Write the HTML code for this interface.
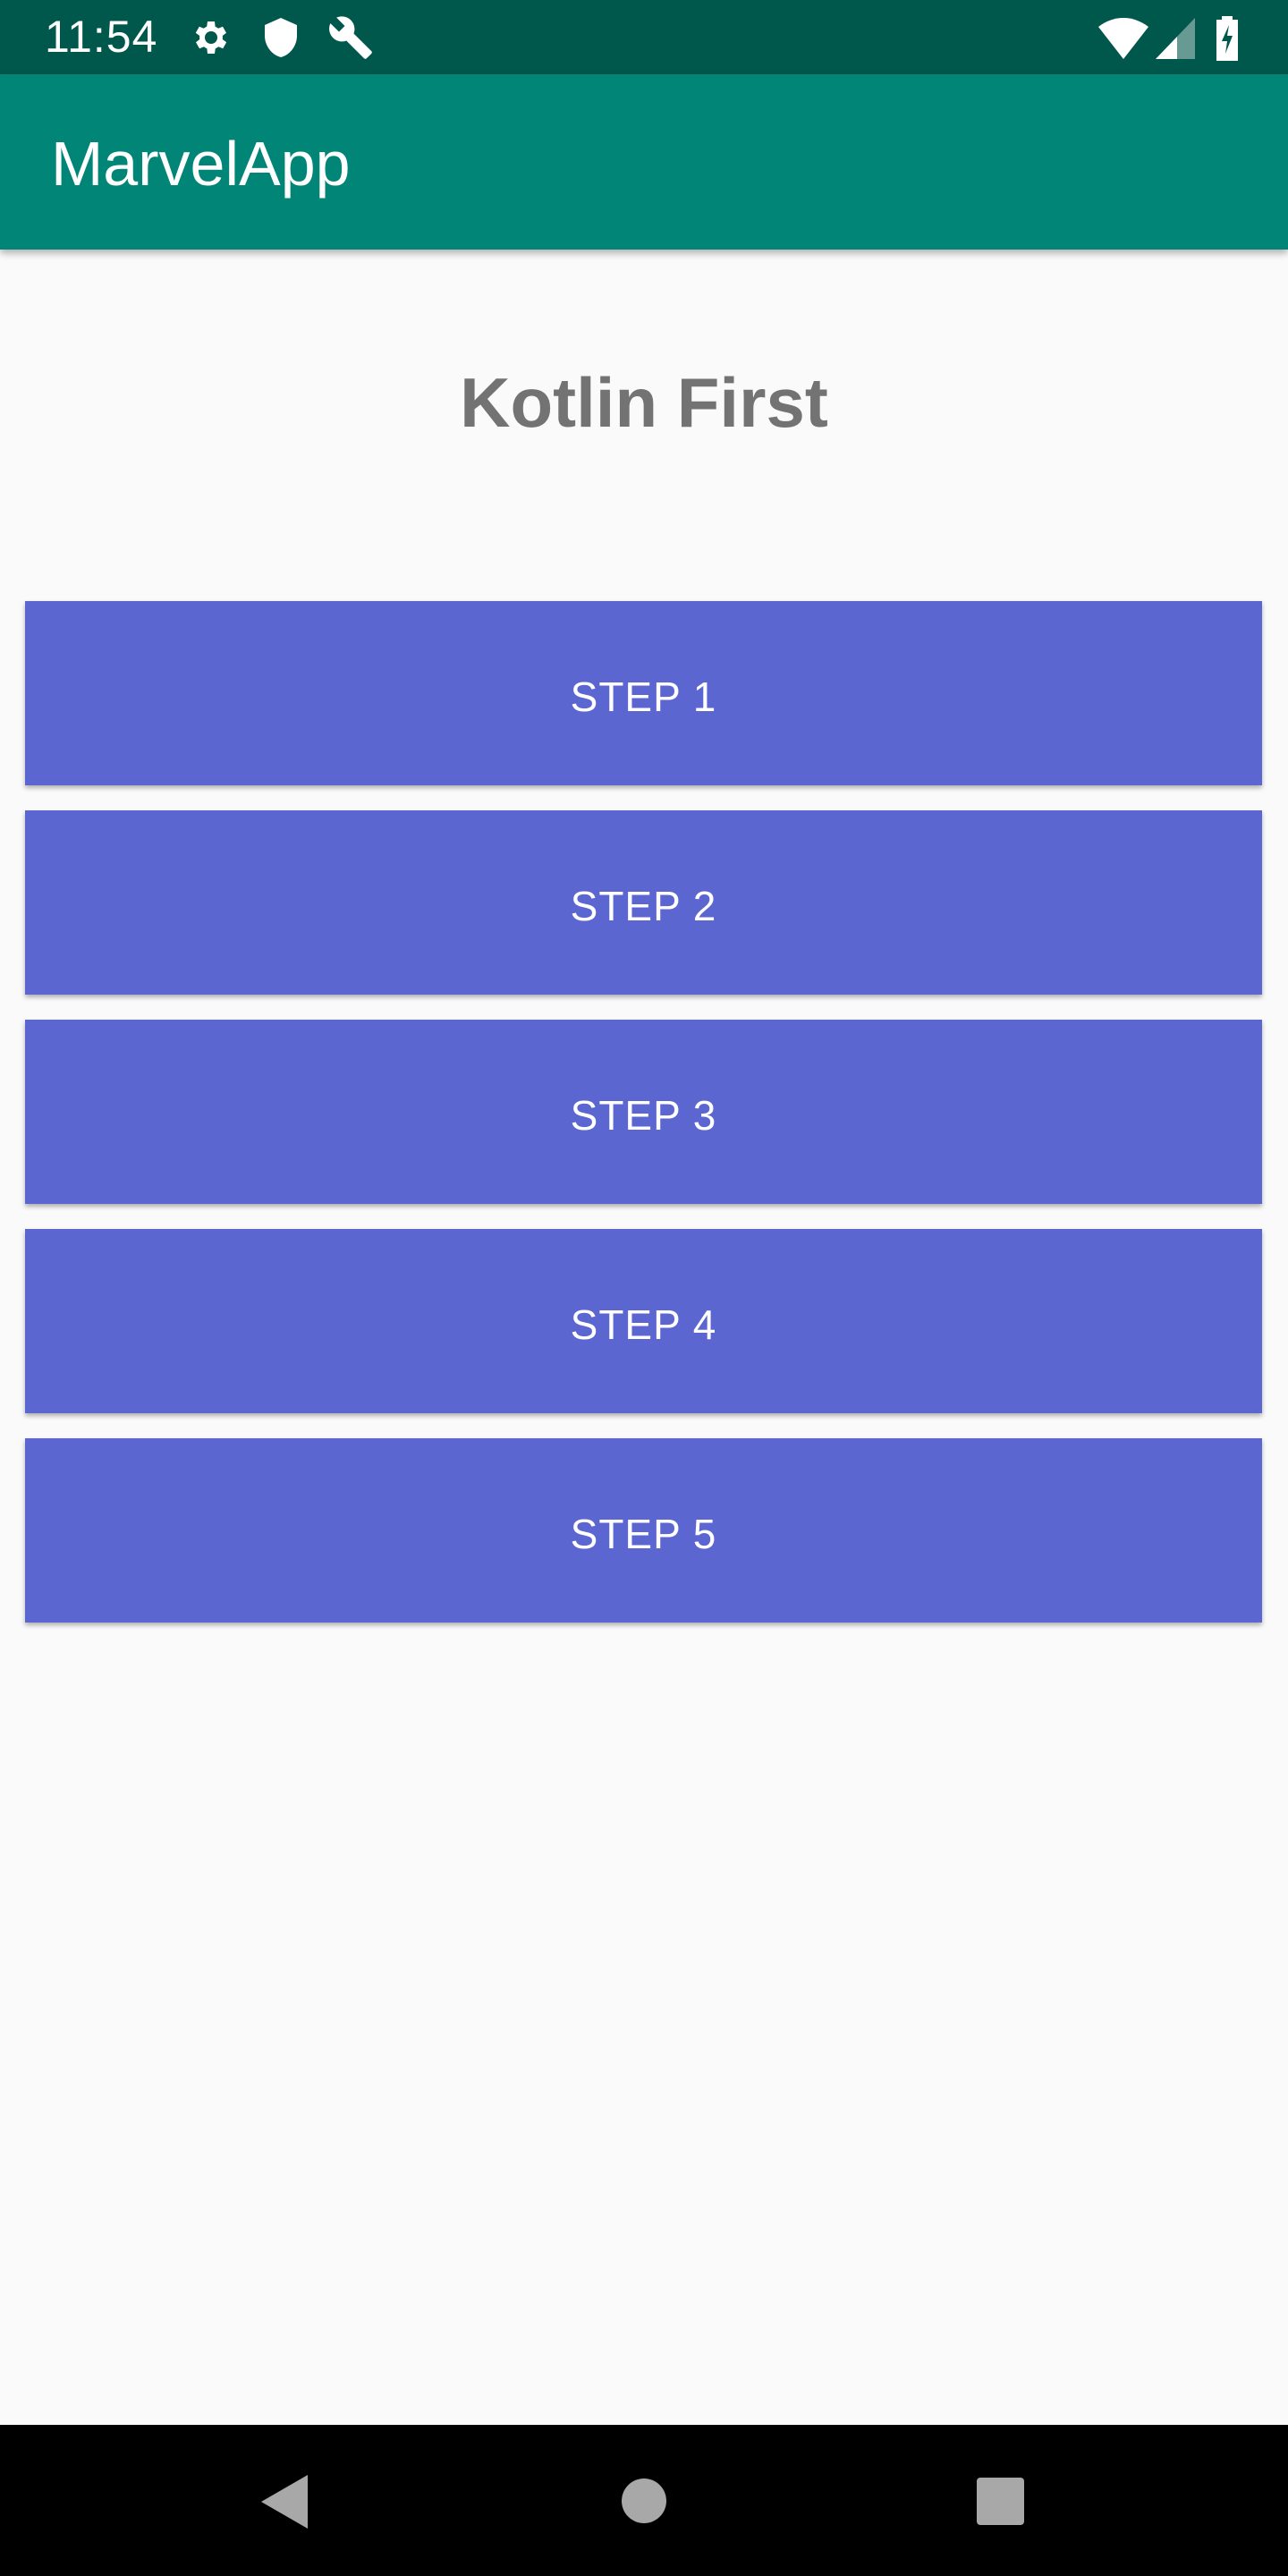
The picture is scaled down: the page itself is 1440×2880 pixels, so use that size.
<!DOCTYPE html>
<html><head><meta charset="utf-8"><style>
html,body{margin:0;padding:0;width:1440px;height:2880px;background:#fafafa;overflow:hidden;font-family:"Liberation Sans",Roboto,sans-serif;position:relative}
.sb{position:absolute;left:0;top:0;width:1440px;height:83px;background:#00574b}
.ab{position:absolute;left:0;top:83px;width:1440px;height:196px;background:#008577;box-shadow:0 4px 8px rgba(0,0,0,.3)}
.time{position:absolute;left:50px;top:13px;color:#fff;font-size:50px;line-height:56px;letter-spacing:1px}
.title{position:absolute;left:57px;top:0;height:196px;line-height:200px;color:#fff;font-size:70px}
.h{position:absolute;left:0;width:1440px;top:405px;text-align:center;font-size:78px;font-weight:bold;color:#737373}
.btn{position:absolute;left:28px;width:1383px;height:206px;background:#5c66d1;color:#fff;font-size:46px;text-align:center;line-height:214px;box-shadow:0 3px 5px rgba(0,0,0,.3);letter-spacing:1px}
.nav{position:absolute;left:0;top:2711px;width:1440px;height:169px;background:#000}
</style></head><body>
<div class="sb">
<div class="time">11:54</div>
<svg style="position:absolute;left:212px;top:18px" width="48" height="48" viewBox="0 0 24 24"><path fill="#fff" d="M19.4 13a7.5 7.5 0 000-2l2.1-1.6-2-3.5-2.5 1a7 7 0 00-1.7-1L15 3h-4l-.4 2.9a7 7 0 00-1.7 1l-2.5-1-2 3.5L6.6 11a7.5 7.5 0 000 2l-2.1 1.6 2 3.5 2.5-1a7 7 0 001.7 1L11 21h4l.4-2.9a7 7 0 001.7-1l2.5 1 2-3.5zM13 15.5a3.5 3.5 0 110-7 3.5 3.5 0 010 7z" transform="translate(-1 0)"/></svg>
<svg style="position:absolute;left:292px;top:18px" width="44" height="48" viewBox="0 0 22 24"><path fill="#fff" d="M11 1L2 5v6c0 5.5 3.8 10.7 9 12 5.2-1.3 9-6.5 9-12V5z"/></svg>
<svg style="position:absolute;left:366px;top:16px" width="52" height="52" viewBox="0 0 24 24"><path fill="#fff" d="M22.7 19l-9.1-9.1c.9-2.3.4-5-1.5-6.9-2-2-5-2.4-7.4-1.3L9 6 6 9 1.6 4.7C.4 7.1.9 10.1 2.9 12.1c1.900 1.9 4.6 2.4 6.9 1.5l9.1 9.1c.4.4 1 .4 1.4 0l2.3-2.3c.5-.4.5-1.1.1-1.4z"/></svg>
<svg style="position:absolute;left:1228px;top:20px" width="56" height="46" viewBox="0 0 28 23"><path fill="#fff" d="M14 23L0 5C4 1.8 9 0 14 0s10 1.8 14 5z"/></svg>
<svg style="position:absolute;left:1292px;top:20px" width="44" height="46" viewBox="0 0 22 23"><path fill="#fff" d="M0 23L22 0v23z" opacity=".4"/><path fill="#fff" d="M0 23L12 10.5V23z"/></svg>
<svg style="position:absolute;left:1358px;top:18px" width="28" height="50" viewBox="0 0 14 25"><path fill="#fff" d="M4 0h6v2h3v23H1V2h3z"/><path fill="#00574b" d="M8 5L4 14h3l-1 7 4-10H7z"/></svg>
</div>
<div class="ab"><div class="title">MarvelApp</div></div>
<div class="h">Kotlin First</div>
<div class="btn" style="top:672px">STEP 1</div>
<div class="btn" style="top:906px">STEP 2</div>
<div class="btn" style="top:1140px">STEP 3</div>
<div class="btn" style="top:1374px">STEP 4</div>
<div class="btn" style="top:1608px">STEP 5</div>
<div class="nav">
<svg style="position:absolute;left:290px;top:56px" width="54" height="60" viewBox="0 0 27 30"><path fill="#a8a8a8" d="M27 0v30L1 15z"/></svg>
<div style="position:absolute;left:695px;top:60px;width:50px;height:50px;border-radius:50%;background:#a8a8a8"></div>
<div style="position:absolute;left:1092px;top:59px;width:53px;height:53px;border-radius:4px;background:#a8a8a8"></div>
</div>
</body></html>
